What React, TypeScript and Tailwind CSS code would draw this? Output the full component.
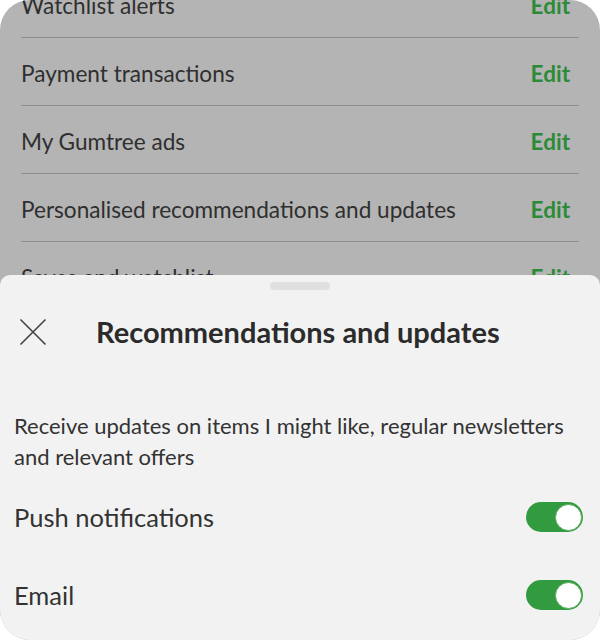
import React from "react";

const rows = [
  "Watchlist alerts",
  "Payment transactions",
  "My Gumtree ads",
  "Personalised recommendations and updates",
  "Saves and watchlist",
];

function Toggle() {
  return (
    <div className="w-[57px] h-[30px] rounded-full bg-[#339b3f] flex items-center justify-end p-[2px] pr-[1px]">
      <div className="w-[27px] h-[27px] rounded-full bg-white border border-[#5aae62]" />
    </div>
  );
}

export default function App() {
  return (
    <div className="w-[600px] h-[640px] bg-white" style={{ fontFamily: "Lato, 'Noto Sans', sans-serif" }}>
      <div className="relative w-[600px] h-[640px] rounded-[30px] overflow-hidden bg-[#b4b4b4]">
        <div className="-mt-[30px] px-[21px]">
          {rows.map((r) => (
            <div
              key={r}
              className="h-[68px] flex items-center justify-between border-b border-[#8e8e8e] pr-[9px] pt-[5px]"
            >
              <span className="text-[22.6px] text-[#2f2f2f]">{r}</span>
              <span className="text-[22.5px] font-bold text-[#2d8a38]">Edit</span>
            </div>
          ))}
        </div>

        <div className="absolute top-[275px] left-0 right-0 bottom-0 bg-[#f2f2f2] rounded-t-[10px] flex flex-col">
          <div className="mt-[7px] mx-auto w-[60px] h-[8px] rounded-full bg-[#e0e0e0]" />
          <div className="mt-[17px] h-[50px] flex items-center">
            <div className="w-[96px] pl-[19px] flex items-center">
              <svg width="28" height="28" viewBox="0 0 28 28" fill="none">
                <path d="M1.5 1.5 L26.5 26.5 M26.5 1.5 L1.5 26.5" stroke="#444" strokeWidth="1.6" />
              </svg>
            </div>
            <span className="text-[29px] font-bold text-[#2b2b2b]">Recommendations and updates</span>
          </div>
          <p className="mt-[53px] px-[14px] text-[22px] leading-[31px] text-[#333]">
            Receive updates on items I might like, regular newsletters and relevant offers
          </p>
          <div className="mt-[30px] h-[30px] flex items-center justify-between pl-[14px] pr-[17px]">
            <span className="text-[25.5px] text-[#333]">Push notifications</span>
            <Toggle />
          </div>
          <div className="mt-[48px] h-[30px] flex items-center justify-between pl-[14px] pr-[17px]">
            <span className="text-[25.5px] text-[#333]">Email</span>
            <Toggle />
          </div>
        </div>
      </div>
    </div>
  );
}
